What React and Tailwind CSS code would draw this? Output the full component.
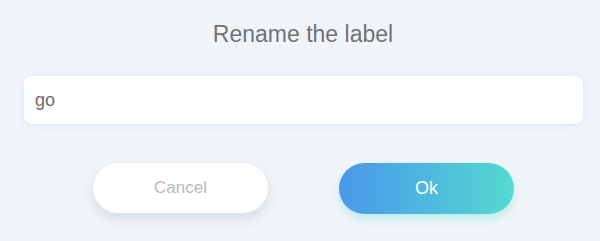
import React from "react";

export default function App() {
  return (
    <div
      className="w-[600px] h-[241px] bg-[#f1f5f9] flex flex-col"
      style={{ fontFamily: '"Liberation Sans", Arial, sans-serif' }}
    >
      <div className="pt-[20px] h-[76px] pl-[6px] text-center text-[23px] leading-[28px] text-[#707376]">
        Rename the label
      </div>
      <div className="pl-[24px] pr-[17px]">
        <div className="h-[48px] rounded-[8px] bg-white flex items-center pl-[11px] text-[18px] text-[#6a6a6a] shadow-[0_1px_6px_rgba(180,195,215,0.35)]">
          go
        </div>
      </div>
      <div className="flex pl-[93px] gap-[71px] mt-[39px]">
        <button className="w-[175px] h-[50px] rounded-full bg-white text-[17px] text-[#b9b9bd] shadow-[0_6px_12px_rgba(120,130,150,0.22)]">
          Cancel
        </button>
        <button className="w-[175px] h-[51px] rounded-full bg-gradient-to-r from-[#4a97e9] to-[#56d9d0] text-[18px] text-white shadow-[0_5px_10px_rgba(86,217,208,0.35)]">
          Ok
        </button>
      </div>
    </div>
  );
}
